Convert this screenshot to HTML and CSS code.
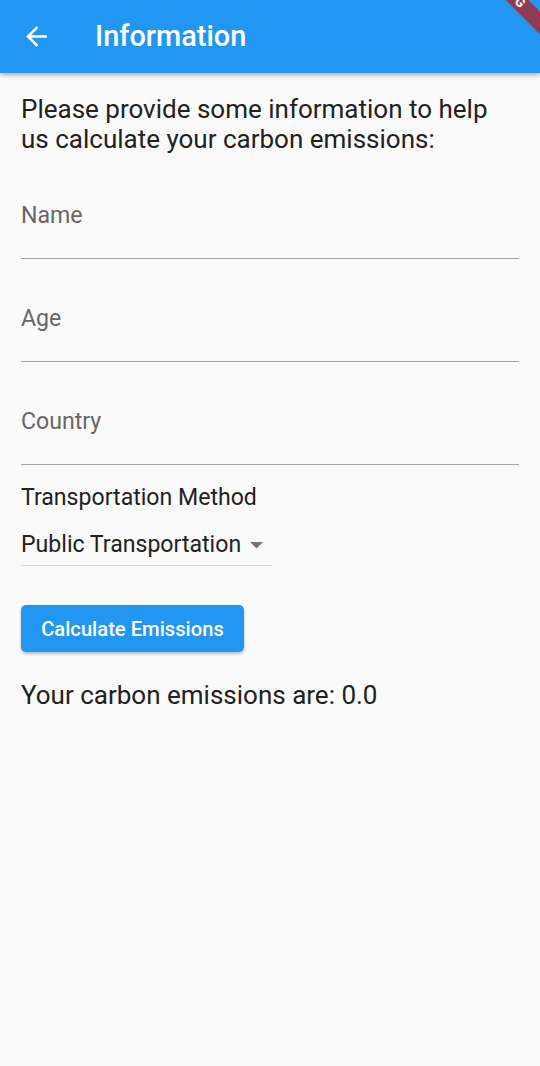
FILE: index.html
```html
<!DOCTYPE html>
<html lang="en">
<head>
<meta charset="utf-8">
<title>Information</title>
<link rel="stylesheet" href="styles.css">
</head>
<body>
<div class="screen">
  <header class="appbar">
    <button class="back" aria-label="Back">
      <svg viewBox="0 0 24 24" width="31" height="31"><path fill="#fff" d="M20 11H7.83l5.59-5.59L12 4l-8 8 8 8 1.41-1.41L7.83 13H20v-2z"/></svg>
    </button>
    <h1 class="title">Information</h1>
  </header>
  <main class="content">
    <p class="intro">Please provide some information to help us calculate your carbon emissions:</p>
    <div class="field field-first"><span class="label">Name</span></div>
    <div class="field"><span class="label">Age</span></div>
    <div class="field"><span class="label">Country</span></div>
    <p class="method">Transportation Method</p>
    <div class="dropdown">
      <span class="dd-value">Public Transportation</span>
      <svg class="dd-icon" viewBox="0 0 24 24" width="31" height="31"><path fill="#757575" d="M7 10l5 5 5-5z"/></svg>
    </div>
    <button class="calc">Calculate Emissions</button>
    <p class="result">Your carbon emissions are: 0.0</p>
  </main>
  <div class="banner-clip"><div class="banner">DEBUG</div></div>
</div>
</body>
</html>
```

FILE: styles.css
```css
* { box-sizing: border-box; }
html, body { margin: 0; padding: 0; }
body {
  background: #fafafa;
  font-family: Roboto, "Noto Sans", sans-serif;
  color: #212121;
}
.screen {
  position: relative;
  width: 540px;
  min-height: 1066px;
  overflow: hidden;
  background: #fafafa;
}
.appbar {
  height: 73px;
  background: #2196f3;
  display: flex;
  align-items: center;
  box-shadow: 0 2px 4px rgba(0,0,0,0.24), 0 1px 8px rgba(0,0,0,0.12);
  position: relative;
  z-index: 1;
}
.back {
  border: 0;
  background: none;
  padding: 0;
  margin: 0 0 0 21px;
  width: 31px;
  height: 31px;
  display: flex;
}
.title {
  margin: 0 0 0 43px;
  font-size: 28.9px;
  font-weight: 500;
  color: #fff;
  line-height: 1;
}
.content {
  padding: 21px 21px 0 21px;
  display: flex;
  flex-direction: column;
  align-items: flex-start;
}
.intro {
  margin: 0;
  font-size: 26px;
  line-height: 30px;
  width: 100%;
}
.field {
  width: 100%;
  padding: 47px 0 29px 0;
  border-bottom: 1px solid #a3a3a3;
}
.field-first { margin-top: 2px; }
.label {
  display: block;
  font-size: 23.1px;
  line-height: 26px;
  color: #666;
}
.method {
  margin: 19px 0 0 0;
  font-size: 23.1px;
  line-height: 28px;
}
.dropdown {
  margin-top: 18px;
  width: 251px;
  display: flex;
  align-items: center;
  border-bottom: 1px solid #d6d6d6;
  padding-bottom: 6px;
  height: 36px;
}
.dd-value {
  font-size: 23.1px;
  line-height: 28px;
  white-space: nowrap;
}
.dd-icon { margin-left: 0; flex: none; }
.calc {
  margin-top: 39px;
  height: 47px;
  width: 223px;
  border: 0;
  border-radius: 5px;
  background: #2196f3;
  color: #fff;
  font-family: Roboto, "Noto Sans", sans-serif;
  font-size: 20.2px;
  font-weight: 500;
  box-shadow: 0 2px 3px rgba(0,0,0,0.25);
  padding: 0;
}
.result {
  margin: 28px 0 0 0;
  font-size: 26px;
  line-height: 30px;
}
.banner-clip {
  position: absolute;
  top: 0;
  right: 0;
  width: 70px;
  height: 70px;
  overflow: hidden;
  z-index: 2;
}
.banner {
  position: absolute;
  left: -33px;
  top: -18px;
  width: 140px;
  height: 16px;
  transform: rotate(45deg);
  background: rgba(183, 28, 28, 0.75);
  color: #fff;
  font-size: 13px;
  font-weight: 700;
  line-height: 16px;
  text-align: center;
  letter-spacing: 1px;
}
```
